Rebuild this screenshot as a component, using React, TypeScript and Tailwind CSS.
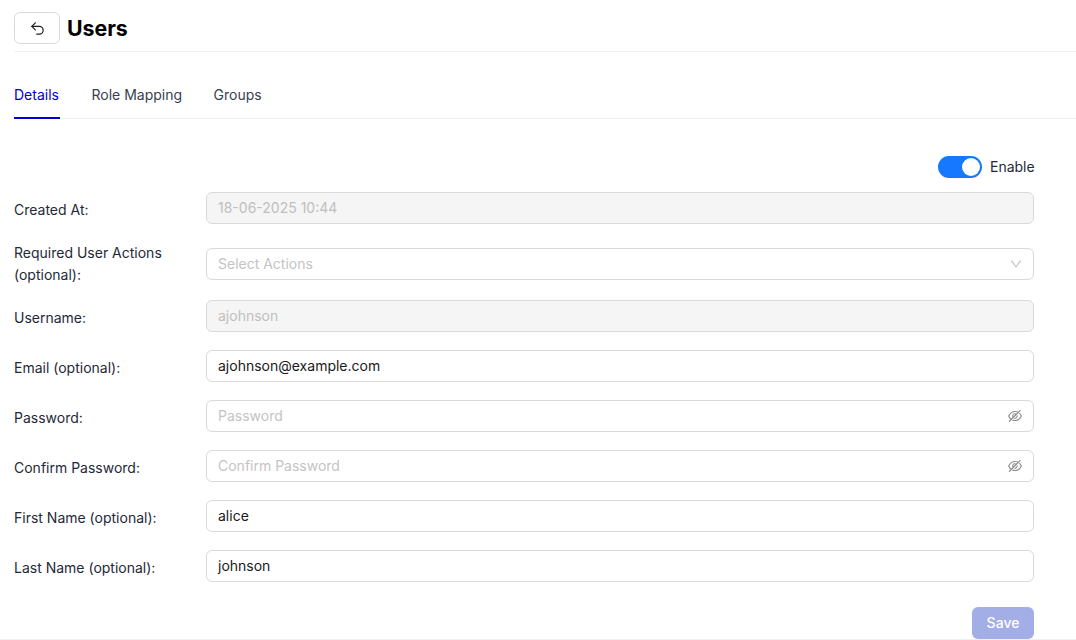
import React from "react";
import { Undo2 } from "lucide-react";
import { AiOutlineEyeInvisible, AiOutlineDown } from "react-icons/ai";

const inputBase =
  "h-8 flex-1 min-w-0 rounded-[6px] border border-[#d9d9d9] px-[11px] flex items-center text-sm";

const Label = ({ children }: { children: React.ReactNode }) => (
  <label className="w-[192px] shrink-0 pt-[7px] text-sm leading-[22px] text-[#1f2937]">
    {children}
  </label>
);

const Row = ({
  label,
  children,
}: {
  label: string;
  children: React.ReactNode;
}) => (
  <div className="flex items-start mb-[18px]">
    <Label>{label}</Label>
    {children}
  </div>
);

const DisabledInput = ({ value }: { value: string }) => (
  <div className={`${inputBase} bg-[#f5f5f5] text-[#bfbfbf]`}>{value}</div>
);

const TextInput = ({ value }: { value: string }) => (
  <div className={`${inputBase} bg-white text-[#1a1a1a]`}>{value}</div>
);

const PasswordInput = ({ placeholder }: { placeholder: string }) => (
  <div className={`${inputBase} bg-white justify-between text-[#c4c4c4]`}>
    <span>{placeholder}</span>
    <AiOutlineEyeInvisible size={16} className="-mr-px text-[#8c8c8c]" />
  </div>
);

export default function App() {
  return (
    <div
      className="w-[1076px] h-[640px] overflow-hidden bg-white"
      style={{ fontFamily: "Inter, sans-serif" }}
    >
      {/* Header */}
      <div className="ml-[14px] h-[52px] pt-3 border-b border-[#f0f0f0] flex items-start gap-[7px]">
        <button className="w-[46px] h-8 rounded-[6px] border border-[#d9d9d9] bg-white flex items-center justify-center text-[#1f1f1f]">
          <Undo2 size={17} strokeWidth={1.75} />
        </button>
        <h1 className="text-[21.3px] leading-8 font-bold text-black">Users</h1>
      </div>

      {/* Tabs */}
      <div className="mt-[21px] ml-[14px] h-[46px] border-b border-[#f0f0f0] flex gap-8 text-sm">
        <div className="h-[46px] w-[45.5px] pt-[12px] leading-[20px] text-[#0000d6] border-b-2 border-[#0000d6]">
          Details
        </div>
        <div className="w-[90px] whitespace-nowrap pt-[12px] leading-[20px] text-[#374151]">
          Role Mapping
        </div>
        <div className="pt-[12px] leading-[20px] text-[#374151]">Groups</div>
      </div>

      {/* Form */}
      <div className="pl-[14px] pr-[42px]">
        <div className="mt-[37px] mb-[14px] h-[22px] flex justify-end items-center gap-2">
          <div className="w-[44px] h-[22px] rounded-full bg-[#1677ff] flex items-center justify-end pr-[2px]">
            <div className="w-[18px] h-[18px] rounded-full bg-white" />
          </div>
          <span className="w-[44px] whitespace-nowrap text-sm text-[#1f2937]">Enable</span>
        </div>

        <Row label="Created At:">
          <DisabledInput value="18-06-2025 10:44" />
        </Row>

        <div className="flex items-center mb-[14px]">
          <label className="w-[192px] shrink-0 text-sm leading-[22px] text-[#1f2937]">
            Required User Actions (optional):
          </label>
          <div className={`${inputBase} bg-white justify-between text-[#c4c4c4]`}>
            <span>Select Actions</span>
            <AiOutlineDown size={14} className="-mr-px text-[#bfbfbf]" />
          </div>
        </div>

        <Row label="Username:">
          <DisabledInput value="ajohnson" />
        </Row>
        <Row label="Email (optional):">
          <TextInput value="ajohnson@example.com" />
        </Row>
        <Row label="Password:">
          <PasswordInput placeholder="Password" />
        </Row>
        <Row label="Confirm Password:">
          <PasswordInput placeholder="Confirm Password" />
        </Row>
        <Row label="First Name (optional):">
          <TextInput value="alice" />
        </Row>
        <Row label="Last Name (optional):">
          <TextInput value="johnson" />
        </Row>

        <div className="flex justify-end mt-[25px]">
          <button className="w-[62px] h-8 rounded-[6px] bg-[#a3aee6] text-sm font-medium text-white">
            Save
          </button>
        </div>
      </div>
      <div className="border-t border-[#f0f0f0]" />
    </div>
  );
}
